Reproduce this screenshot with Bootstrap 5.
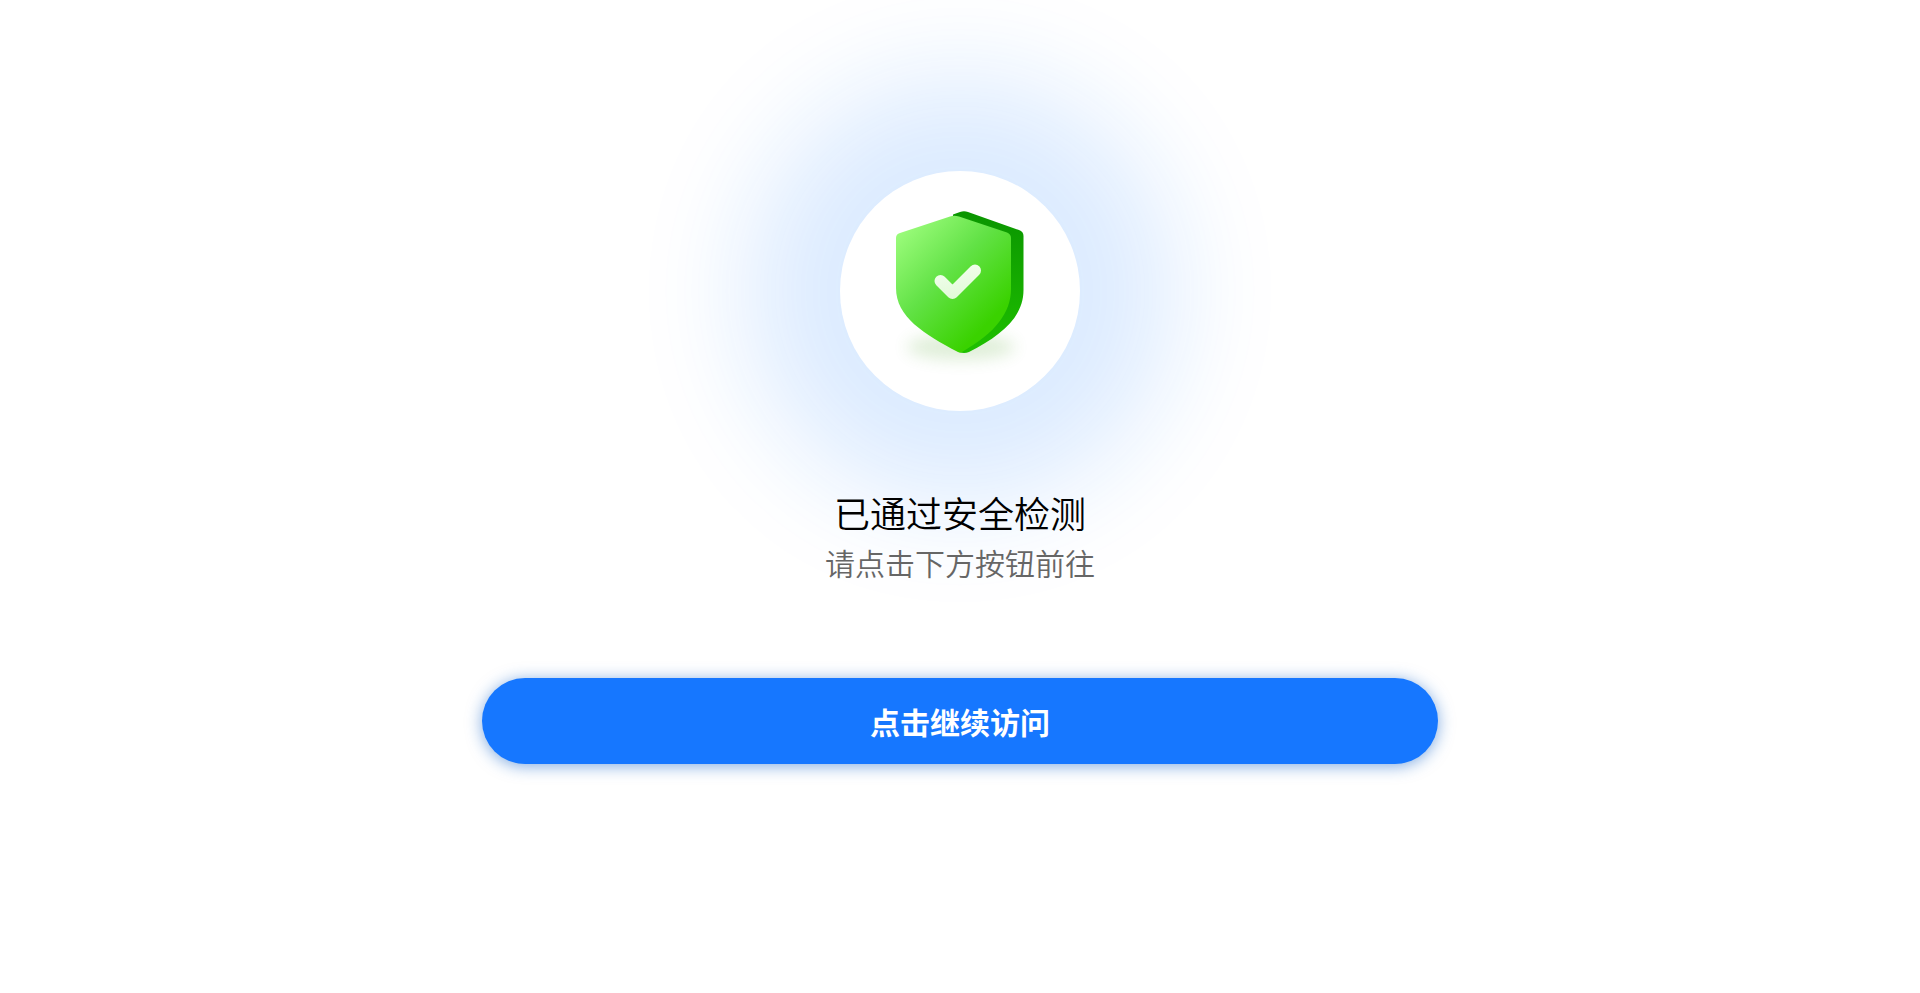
<!DOCTYPE html>
<html lang="zh-CN">
<head>
<meta charset="utf-8">
<meta name="viewport" content="width=device-width, initial-scale=1">
<title>已通过安全检测</title>
<link href="https://cdn.jsdelivr.net/npm/bootstrap@5.3.0/dist/css/bootstrap.min.css" rel="stylesheet">
<style>
  body { font-family: "Noto Sans CJK SC", sans-serif; color: #000; background: #fff; }
  .check-page { padding: 171px 0 48px; }
  .shield-halo {
    width: 240px; height: 240px; padding: 32px 48px;
    background: #fff;
    box-shadow: 0 0 110px 94px rgba(22, 119, 255, .15);
  }
  .check-title { margin-top: 76px; font-size: 36px; font-weight: 350; line-height: 50px; position: relative; }
  .check-hint { font-size: 30px; font-weight: 350; line-height: 50px; color: #666; position: relative; }
  .visit-row { margin-top: 91px; padding: 0 2px; }
  .btn-visit {
    --bs-btn-color: #fff; --bs-btn-bg: #1677ff; --bs-btn-hover-color: #fff; --bs-btn-hover-bg: #0f6bec;
    --bs-btn-active-color: #fff; --bs-btn-active-bg: #0b5fd6;
    --bs-btn-font-size: 30px; --bs-btn-line-height: 46px; --bs-btn-padding-y: 20px;
    --bs-btn-border-width: 0; --bs-btn-font-weight: 700;
    box-shadow: 0 2px 16px rgba(22, 100, 200, .55);
  }
</style>
</head>
<body>
<main class="check-page container-fluid d-flex flex-column align-items-center text-center">
  <div class="shield-halo rounded-circle flex-shrink-0">
    <svg class="d-block" width="144" height="176" viewBox="0 0 144 176" role="img" aria-label="安全">
      <defs>
        <linearGradient id="face" x1="8" y1="30" x2="100" y2="120" gradientUnits="userSpaceOnUse">
          <stop offset="0" stop-color="#9cfc7c"/><stop offset=".5" stop-color="#62e246"/><stop offset="1" stop-color="#3ad200"/>
        </linearGradient>
        <linearGradient id="side" x1="100" y1="10" x2="100" y2="150" gradientUnits="userSpaceOnUse">
          <stop offset="0" stop-color="#0a9600"/><stop offset="1" stop-color="#1fc000"/>
        </linearGradient>
        <linearGradient id="tick" x1="60" y1="60" x2="68" y2="98" gradientUnits="userSpaceOnUse">
          <stop offset="0" stop-color="#f4fff0"/><stop offset="1" stop-color="#e0fad6"/>
        </linearGradient>
        <filter id="soft" x="-30%" y="-80%" width="160%" height="260%"><feGaussianBlur stdDeviation="8"/></filter>
      </defs>
      <ellipse cx="73" cy="144" rx="54" ry="13" fill="#59a936" opacity=".19" filter="url(#soft)"/>
      <path fill="url(#side)" d="M65 11.500L72 9Q76 7.500 80 9L131 27Q135.500 28.500 135.500 33V87C135.500 115 112 133 81 149Q76 151 71 149L60 142Z"/>
      <path fill="url(#face)" d="M62 13.500Q66 12 71 13.500L119 29.500Q123 31 123 35V86C123 109 108 130 73 149.500Q71 149.500 70 149C36 131 8 114 8 85V35Q8 31 12 30Z"/>
      <path d="M52.500 78L64.500 90L87 67.500" fill="none" stroke="url(#tick)" stroke-width="12" stroke-linecap="round" stroke-linejoin="round"/>
    </svg>
  </div>
  <h1 class="check-title mb-0">已通过安全检测</h1>
  <p class="check-hint mb-0">请点击下方按钮前往</p>
  <div class="visit-row col-6">
    <button type="button" class="btn btn-visit rounded-pill w-100">点击继续访问</button>
  </div>
</main>
<script src="https://cdn.jsdelivr.net/npm/bootstrap@5.3.0/dist/js/bootstrap.bundle.min.js"></script>
</body>
</html>
